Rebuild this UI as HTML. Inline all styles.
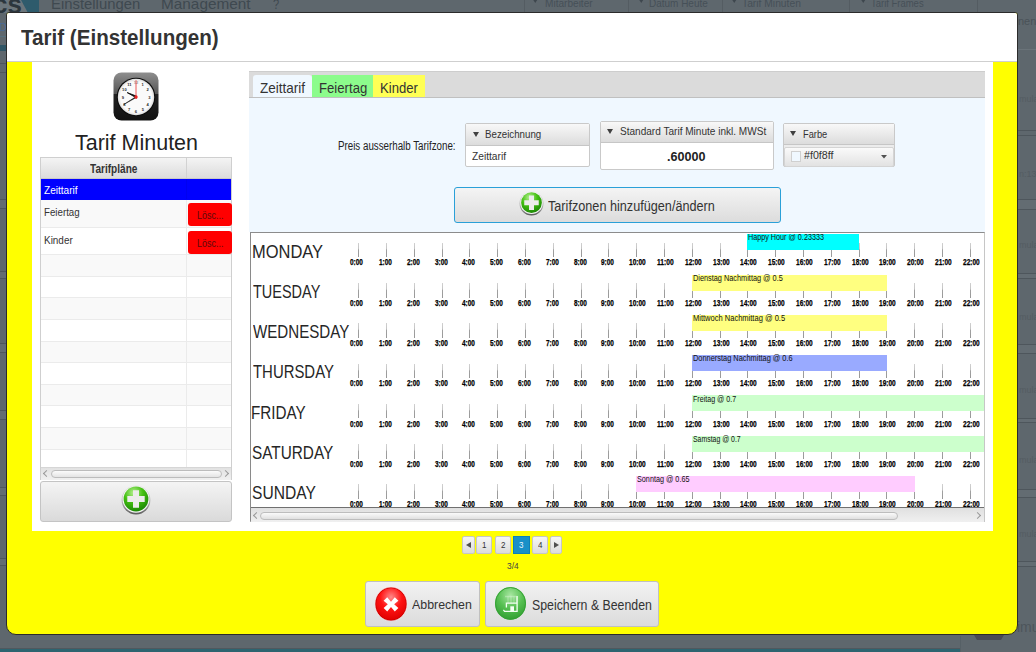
<!DOCTYPE html>
<html><head><meta charset="utf-8">
<style>
*{box-sizing:border-box;margin:0;padding:0}
html,body{width:1036px;height:652px;overflow:hidden}
body{position:relative;background:#5e676d;font-family:"Liberation Sans",sans-serif;color:#333}
.a{position:absolute}
.t{position:absolute;white-space:nowrap;transform-origin:0 0}
#modal{position:absolute;left:6px;top:12px;width:1012px;height:623px;background:#ffff00;border:1px solid #2b2b2b;border-radius:3px 3px 10px 10px;overflow:hidden}
#hdr{position:absolute;left:0;top:0;width:100%;height:49px;background:#fff;border-bottom:1px solid #cfcfcf}
#panel{position:absolute;left:32px;top:62px;width:961px;height:469.3px;background:#fff}
#table{position:absolute;left:40px;top:157px;width:192px;height:323px;border:1px solid #cfcfcf;border-bottom:none;background:#fff}
.th{position:absolute;left:41px;top:158px;width:190px;height:21.3px;background:linear-gradient(#f4f4f4,#dcdcdc);border-bottom:1px solid #c8c8c8}
.th i{position:absolute;left:144.6px;top:0;height:100%;border-left:1px solid #d2d2d2}
.tr{position:absolute;left:41px;width:190px;background:#fff;border-bottom:1px solid #ebebeb}
.tr.alt{background:#f9f9f9}
.tr.sel{background:#0000ff;border-bottom-color:#0000ff}
.tr::after{content:"";position:absolute;left:144.6px;top:0;height:100%;border-left:1px solid #ebebeb}
.tr.sel::after{border-left-color:#0000f0}
.del{position:absolute;left:188.1px;width:43.5px;height:23.2px;background:#ff0000;border-radius:3px}
#tscroll{position:absolute;left:41px;top:467.4px;width:190px;height:12.2px;background:linear-gradient(#e2e2e2,#f0f0f0);border-top:1px solid #d6d6d6}
#tscroll .thumb{position:absolute;left:9.5px;top:1.3px;width:171px;height:8.3px;border:1px solid #bcbcbc;border-radius:4px;background:linear-gradient(#fbfbfb,#e4e4e4)}
.chev{position:absolute;width:5px;height:5px;border-left:1px solid #999;border-bottom:1px solid #999}
#addbtn{position:absolute;left:40px;top:480.5px;width:192px;height:41.5px;border:1px solid #c4c4c4;border-radius:3px;background:linear-gradient(#f4f4f4,#dadada)}
#tabhdr{position:absolute;left:249px;top:70.8px;width:735.5px;height:27.5px;background:#dbdbdb;border-top:1px solid #cdcdcd;border-bottom:1.3px solid #c0c0c0}
.tab{position:absolute;top:74.8px;height:22.2px}
#content{position:absolute;left:249px;top:98px;width:735.5px;height:134px;background:#f0f8ff}
.colbox{position:absolute;border:1px solid #c9c9c9;border-radius:2px;background:#fff}
.colh{position:absolute;left:0;top:0;width:100%;height:21px;background:linear-gradient(#f8f8f8,#dcdcdc);border-bottom:1px solid #c6c6c6}
.tri{position:absolute;width:0;height:0;border-left:2.9px solid transparent;border-right:2.9px solid transparent;border-top:4.6px solid #444}
#tzbtn{position:absolute;left:454px;top:186.6px;width:327px;height:36.2px;border:1px solid #2aa0d8;border-radius:3px;background:linear-gradient(#f4f4f4,#dcdcdc)}
#tl{position:absolute;left:249.6px;top:232.2px;width:735.4px;height:290.2px;border:1px solid #c6c6c6;border-left-color:#8a8a8a;border-top:1.3px solid #8c8c8c;background:#fff}
#tlclip{position:absolute;left:250.6px;top:233.5px;width:733.4px;height:273.8px;overflow:hidden}
#tlin{position:absolute;left:-250.6px;top:-233.5px;width:1036px;height:652px}
.tlb{-webkit-text-stroke:0.25px #000}
.tick{position:absolute;width:1px;height:14.6px;background:linear-gradient(#d0d0d0,#c4c4c4 40%,#a0a0a0 50%,#989898)}
.bar{position:absolute;height:16px}
#hscroll{position:absolute;left:250.6px;top:507.3px;width:733.4px;height:14.4px;background:linear-gradient(#e0e0e0,#f0f0f0);border-top:1px solid #707070}
#hscroll .thumb{position:absolute;left:9.4px;top:3.9px;width:638.3px;height:7.4px;border:1px solid #bdbdbd;border-radius:4px;background:linear-gradient(#fafafa,#e0e0e0)}
.pg{position:absolute;top:536.1px;height:17.6px;border:1px solid #c6c6c6;border-radius:2px;background:linear-gradient(#f6f6f6,#dcdcdc)}
.pg.sel{background:#1990c8;border-color:#0f80b8;border-radius:0}
.btn{position:absolute;top:581px;height:45.8px;border:1px solid #c0c0c0;border-radius:3px;background:linear-gradient(#f2f2f2,#dcdcdc)}
.bgl{position:absolute;background:#545c62}
</style></head><body>
<div class="a" style="left:0;top:0;width:28px;height:13px;background:#6b757b"></div>
<svg class="a" style="left:0;top:0" width="40" height="13"><path d="M21 0H39V13H28Z" fill="#2e5b6c"/></svg>
<div class="t" style="left:-7px;top:-9px;font-size:26px;line-height:26px;font-weight:bold;color:#2c363d">cs</div>
<div class="t" style="left:-1px;top:22px;font-size:11px;line-height:11px;color:#4a6a96">D</div>
<div class="a" style="left:0;top:35.5px;width:7px;height:1px;background:#56707e"></div>
<div class="t " style="left:50.59px;top:-3.17px;font-size:14.78px;line-height:14.78px;color:#3f4950;transform:scaleX(1.006);">Einstellungen</div><div class="t " style="left:160.96px;top:-3.17px;font-size:14.78px;line-height:14.78px;color:#3f4950;transform:scaleX(1.040);">Management</div><div class="t " style="left:273.00px;top:-3.17px;font-size:14.78px;line-height:14.78px;color:#3f4950;transform:scaleX(0.750);">?</div><div class="t " style="left:544.60px;top:-0.75px;font-size:10.29px;line-height:10.29px;color:#465058;transform:scaleX(0.981);">Mitarbeiter</div><div class="t " style="left:649.00px;top:-0.75px;font-size:10.29px;line-height:10.29px;color:#465058;transform:scaleX(0.970);">Datum Heute</div><div class="t " style="left:742.00px;top:-0.75px;font-size:10.29px;line-height:10.29px;color:#465058;">Tarif Minuten</div><div class="t " style="left:870.50px;top:-0.75px;font-size:10.29px;line-height:10.29px;color:#465058;transform:scaleX(0.921);">Tarif Frames</div><svg class="a" style="left:532px;top:-2px" width="7" height="6"><path d="M0 0H6.5L3.25 5Z" fill="#3e474e"/></svg><svg class="a" style="left:637.5px;top:-2px" width="7" height="6"><path d="M0 0H6.5L3.25 5Z" fill="#3e474e"/></svg><svg class="a" style="left:731px;top:-2px" width="7" height="6"><path d="M0 0H6.5L3.25 5Z" fill="#3e474e"/></svg><svg class="a" style="left:859.5px;top:-2px" width="7" height="6"><path d="M0 0H6.5L3.25 5Z" fill="#3e474e"/></svg>
<div class="a" style="left:0;top:199px;width:7px;height:1px;background:#4e565c"></div><div class="a" style="left:0;top:208px;width:7px;height:1px;background:#4e565c"></div><div class="a" style="left:0;top:200px;width:7px;height:8px;background:#636c72"></div><div class="a" style="left:0;top:271px;width:7px;height:1px;background:#4e565c"></div><div class="a" style="left:0;top:278px;width:7px;height:1px;background:#4e565c"></div><div class="a" style="left:0;top:272px;width:7px;height:6px;background:#636c72"></div><div class="a" style="left:0;top:343px;width:7px;height:1px;background:#4e565c"></div><div class="a" style="left:0;top:352px;width:7px;height:1px;background:#4e565c"></div><div class="a" style="left:0;top:344px;width:7px;height:8px;background:#636c72"></div><div class="a" style="left:0;top:410px;width:7px;height:1px;background:#4e565c"></div><div class="a" style="left:0;top:419px;width:7px;height:1px;background:#4e565c"></div><div class="a" style="left:0;top:411px;width:7px;height:8px;background:#636c72"></div><div class="a" style="left:0;top:487px;width:7px;height:1px;background:#4e565c"></div><div class="a" style="left:0;top:495px;width:7px;height:1px;background:#4e565c"></div><div class="a" style="left:0;top:488px;width:7px;height:7px;background:#636c72"></div><div class="a" style="left:0;top:558px;width:7px;height:1px;background:#4e565c"></div><div class="a" style="left:0;top:565px;width:7px;height:1px;background:#4e565c"></div><div class="a" style="left:0;top:559px;width:7px;height:6px;background:#636c72"></div><div class="a" style="left:1018px;top:199px;width:18px;height:1px;background:#4e565c"></div><div class="a" style="left:1018px;top:209px;width:18px;height:1px;background:#4e565c"></div><div class="a" style="left:1018px;top:200px;width:18px;height:9px;background:#636c72"></div><div class="a" style="left:1018px;top:273px;width:18px;height:1px;background:#4e565c"></div><div class="a" style="left:1018px;top:278px;width:18px;height:1px;background:#4e565c"></div><div class="a" style="left:1018px;top:274px;width:18px;height:4px;background:#636c72"></div><div class="a" style="left:1018px;top:344px;width:18px;height:1px;background:#4e565c"></div><div class="a" style="left:1018px;top:353px;width:18px;height:1px;background:#4e565c"></div><div class="a" style="left:1018px;top:345px;width:18px;height:8px;background:#636c72"></div><div class="a" style="left:1018px;top:418px;width:18px;height:1px;background:#4e565c"></div><div class="a" style="left:1018px;top:422px;width:18px;height:1px;background:#4e565c"></div><div class="a" style="left:1018px;top:419px;width:18px;height:3px;background:#636c72"></div><div class="a" style="left:1018px;top:489px;width:18px;height:1px;background:#4e565c"></div><div class="a" style="left:1018px;top:497px;width:18px;height:1px;background:#4e565c"></div><div class="a" style="left:1018px;top:490px;width:18px;height:7px;background:#636c72"></div><div class="a" style="left:1018px;top:561px;width:18px;height:1px;background:#4e565c"></div><div class="a" style="left:1018px;top:566px;width:18px;height:1px;background:#4e565c"></div><div class="a" style="left:1018px;top:562px;width:18px;height:4px;background:#636c72"></div><div class="a" style="left:1018px;top:49px;width:18px;height:1px;background:#6a7379"></div><div class="a" style="left:1018px;top:130px;width:18px;height:1px;background:#4e565c"></div><div class="a" style="left:1018px;top:135px;width:18px;height:1px;background:#4e565c"></div><div class="a" style="left:0;top:44.5px;width:7px;height:6.5px;background:#2f5565"></div><div class="a" style="left:0;top:63px;width:7px;height:1px;background:#4e565c"></div><div class="a" style="left:0;top:72px;width:7px;height:1px;background:#4e565c"></div><div class="t" style="left:1019px;top:95px;font-size:9px;line-height:9px;color:#545c62">mulat</div><div class="t" style="left:1019px;top:170px;font-size:9px;line-height:9px;color:#545c62">n:13</div><div class="t" style="left:1019px;top:241px;font-size:9px;line-height:9px;color:#545c62">mulat</div><div class="t" style="left:1019px;top:313px;font-size:9px;line-height:9px;color:#545c62">mulat</div><div class="t" style="left:1019px;top:386px;font-size:9px;line-height:9px;color:#545c62">mulat</div><div class="t" style="left:1019px;top:456px;font-size:9px;line-height:9px;color:#545c62">mulat</div><div class="t" style="left:1019px;top:530px;font-size:9px;line-height:9px;color:#545c62">mulat</div><div class="t" style="left:1018px;top:16px;font-size:11px;line-height:11px;color:#4a5258">nena</div><div class="t" style="left:1017px;top:620px;font-size:14px;line-height:14px;color:#4d555b">imu</div>
<div class="bgl" style="left:523.5px;top:0;width:1px;height:13px"></div>
<div class="bgl" style="left:627.5px;top:0;width:1px;height:13px"></div>
<div class="bgl" style="left:721.5px;top:0;width:1px;height:13px"></div>
<div class="bgl" style="left:849px;top:0;width:1px;height:13px"></div>
<div class="bgl" style="left:977px;top:0;width:1px;height:13px"></div>
<div class="a" style="left:0;top:648px;width:960px;height:1px;background:#50585e"></div><div class="a" style="left:0;top:649px;width:960px;height:3px;background:#2d6470"></div><div class="a" style="left:960px;top:636px;width:1px;height:16px;background:#566066"></div>
<svg class="a" style="left:973px;top:635px" width="32" height="6"><path d="M1 0 H31 L28 5 H4 Z" fill="#4a4a54"/></svg>

<div id="modal"><div id="hdr"></div></div>
<div id="panel"></div>
<div class="a" style="left:113px;top:72px"><svg width="46" height="49" viewBox="0 0 46 49">
<defs><linearGradient id="cg" x1="0" y1="0" x2="0" y2="1"><stop offset="0" stop-color="#8e8e8e"/><stop offset="0.44" stop-color="#555"/><stop offset="0.45" stop-color="#222"/><stop offset="1" stop-color="#111"/></linearGradient>
<radialGradient id="cf" cx="0.5" cy="0.5" r="0.5"><stop offset="0.85" stop-color="#fafafa"/><stop offset="1" stop-color="#dcdcdc"/></radialGradient></defs>
<rect x="0.5" y="0.5" width="45" height="48" rx="8" fill="url(#cg)"/>
<circle cx="23" cy="25" r="19.3" fill="#0c0c0c"/>
<circle cx="23" cy="25" r="18.2" fill="url(#cf)"/>
<g font-family="Liberation Sans" font-size="4.1" font-weight="bold" fill="#2a2a2a" text-anchor="middle">
<text x="23" y="12.3" fill="#999">12</text><text x="29.6" y="14">1</text><text x="34.6" y="19.2">2</text><text x="36.3" y="26.5">3</text><text x="34.6" y="33.6">4</text><text x="29.8" y="38.6">5</text><text x="23" y="40.6">6</text><text x="16.2" y="38.6">7</text><text x="11.4" y="33.6">8</text><text x="9.8" y="26.5">9</text><text x="11.4" y="19.2">10</text><text x="16.3" y="14">11</text></g>
<path d="M23.6 26 L14.2 20.6 L22.6 23.8 Z" fill="#111" stroke="#111" stroke-width="0.9" stroke-linejoin="round"/>
<path d="M23.6 24.2 L10.6 32.6 L22.4 26 Z" fill="#111" stroke="#111" stroke-width="0.5" stroke-linejoin="round"/>
<line x1="23" y1="27" x2="23" y2="8.2" stroke="#e82020" stroke-width="0.75"/>
<circle cx="23" cy="25" r="1.7" fill="#e82020"/>
</svg></div>
<div id="table"></div>
<div class="th"><i></i></div>
<div class="tr sel" style="top:178.6px;height:21.6px"></div>
<div class="tr alt" style="top:200.2px;height:27.4px"></div>
<div class="del" style="top:203.1px"></div>
<div class="tr " style="top:227.6px;height:27.6px"></div>
<div class="del" style="top:230.5px"></div>
<div class="tr alt" style="top:255.2px;height:21.6px"></div>
<div class="tr " style="top:276.8px;height:21.6px"></div>
<div class="tr alt" style="top:298.4px;height:21.6px"></div>
<div class="tr " style="top:320.0px;height:21.6px"></div>
<div class="tr alt" style="top:341.6px;height:21.6px"></div>
<div class="tr " style="top:363.2px;height:21.6px"></div>
<div class="tr alt" style="top:384.8px;height:21.6px"></div>
<div class="tr " style="top:406.4px;height:21.6px"></div>
<div class="tr alt" style="top:428.0px;height:21.6px"></div>
<div class="tr " style="top:449.6px;height:21.6px"></div>
<div class="t " style="left:43.70px;top:184.61px;font-size:11.16px;line-height:11.16px;color:#fff;transform:scaleX(0.903);">Zeittarif</div>
<div class="t " style="left:43.70px;top:206.32px;font-size:11.74px;line-height:11.74px;color:#333;transform:scaleX(0.828);">Feiertag</div>
<div class="t " style="left:43.70px;top:234.02px;font-size:11.74px;line-height:11.74px;color:#333;transform:scaleX(0.847);">Kinder</div>
<div class="t " style="left:197.20px;top:210.85px;font-size:10.29px;line-height:10.29px;color:#5c0a0a;transform:scaleX(0.873);">Lösc...</div>
<div class="t " style="left:197.20px;top:238.65px;font-size:10.29px;line-height:10.29px;color:#5c0a0a;transform:scaleX(0.873);">Lösc...</div>
<div id="tscroll"><div class="chev" style="left:3px;top:3px;transform:rotate(45deg)"></div><div class="thumb"></div><div class="chev" style="left:182px;top:3px;transform:rotate(-135deg)"></div></div>
<div id="addbtn"></div><div class="a" style="left:120.6px;top:483.6px"><svg width="30" height="32" viewBox="0 0 30 32">
<defs><radialGradient id="ga" cx="0.4" cy="0.25" r="0.75"><stop offset="0" stop-color="#b4f090"/><stop offset="0.5" stop-color="#44c012"/><stop offset="1" stop-color="#1d8a06"/></radialGradient>
<linearGradient id="ra" x1="0" y1="0" x2="0" y2="1"><stop offset="0" stop-color="#e8e8e8"/><stop offset="0.6" stop-color="#b0b0b0"/><stop offset="1" stop-color="#5a5a5a"/></linearGradient></defs>
<circle cx="15" cy="16" r="14.4" fill="url(#ra)"/>
<circle cx="15" cy="15.3" r="13.4" fill="#f6f6f6"/>
<circle cx="15" cy="15" r="12.4" fill="url(#ga)"/>
<path d="M12 6.3h6v5.7h5.7v6H18v5.7h-6V18H6.3v-6H12z" fill="#ececec"/>
</svg></div>

<div id="tabhdr"></div>
<div class="tab" style="left:253px;width:59.2px;background:#f0f8ff;border-radius:3px 3px 0 0"></div>
<div class="tab" style="left:312.2px;width:60.8px;background:#8cfc8c"></div>
<div class="tab" style="left:373px;width:51.5px;background:#ffff55"></div>
<div id="content"></div>
<div class="colbox" style="left:465px;top:123px;width:125.4px;height:44.4px"><div class="colh" style="height:21.7px"></div></div>
<div class="colbox" style="left:599.5px;top:120.7px;width:174px;height:49.3px"><div class="colh" style="height:21.4px"></div></div>
<div class="colbox" style="left:782.5px;top:123.2px;width:112px;height:44px;background:#ececec"><div class="colh" style="height:21.3px"></div>
 <div class="a" style="left:0.5px;top:22.4px;width:110px;height:20px;border:1px solid #d4d4d4;border-radius:2px;background:linear-gradient(#fafafa,#e2e2e2)"></div>
 <div class="a" style="left:7.2px;top:26.7px;width:10.5px;height:11.3px;background:#f0f8ff;border:1px solid #d0d0d0"></div>
 
</div>
<svg class="a" style="left:473px;top:131.7px" width="6" height="5"><path d="M0 0H6L3 5Z" fill="#404040"/></svg><svg class="a" style="left:607.4px;top:129.2px" width="6" height="5"><path d="M0 0H6L3 5Z" fill="#404040"/></svg><svg class="a" style="left:790.3px;top:131.3px" width="6" height="5"><path d="M0 0H6L3 5Z" fill="#404040"/></svg>
<svg class="a" style="left:881px;top:154.8px" width="6" height="4"><path d="M0 0H6L3 3.6Z" fill="#505050"/></svg>
<div id="tzbtn"></div><div class="a" style="left:519px;top:190.1px"><svg width="25" height="27" viewBox="0 0 30 32">
<defs><radialGradient id="gb" cx="0.4" cy="0.25" r="0.75"><stop offset="0" stop-color="#b4f090"/><stop offset="0.5" stop-color="#44c012"/><stop offset="1" stop-color="#1d8a06"/></radialGradient>
<linearGradient id="rb" x1="0" y1="0" x2="0" y2="1"><stop offset="0" stop-color="#e8e8e8"/><stop offset="0.6" stop-color="#b0b0b0"/><stop offset="1" stop-color="#5a5a5a"/></linearGradient></defs>
<circle cx="15" cy="16" r="14.4" fill="url(#rb)"/>
<circle cx="15" cy="15.3" r="13.4" fill="#f6f6f6"/>
<circle cx="15" cy="15" r="12.4" fill="url(#gb)"/>
<path d="M12 6.3h6v5.7h5.7v6H18v5.7h-6V18H6.3v-6H12z" fill="#ececec"/>
</svg></div>

<div id="tl"></div>
<div id="tlclip"><div id="tlin">
<div class="t " style="left:251.57px;top:243.57px;font-size:17.68px;line-height:17.68px;color:#262626;transform:scaleX(0.932);">MONDAY</div>
<div class="tick" style="left:358.1px;top:242.8px"></div>
<div class="t tlb" style="left:350.30px;top:258.49px;font-size:8.84px;line-height:8.84px;color:#000;font-weight:bold;transform:scaleX(0.732);">0:00</div>
<div class="tick" style="left:385.9px;top:242.8px"></div>
<div class="t tlb" style="left:378.90px;top:258.49px;font-size:8.84px;line-height:8.84px;color:#000;font-weight:bold;transform:scaleX(0.732);">1:00</div>
<div class="tick" style="left:413.7px;top:242.8px"></div>
<div class="t tlb" style="left:406.70px;top:258.49px;font-size:8.84px;line-height:8.84px;color:#000;font-weight:bold;transform:scaleX(0.732);">2:00</div>
<div class="tick" style="left:441.5px;top:242.8px"></div>
<div class="t tlb" style="left:434.50px;top:258.49px;font-size:8.84px;line-height:8.84px;color:#000;font-weight:bold;transform:scaleX(0.732);">3:00</div>
<div class="tick" style="left:469.3px;top:242.8px"></div>
<div class="t tlb" style="left:462.30px;top:258.49px;font-size:8.84px;line-height:8.84px;color:#000;font-weight:bold;transform:scaleX(0.732);">4:00</div>
<div class="tick" style="left:497.1px;top:242.8px"></div>
<div class="t tlb" style="left:490.10px;top:258.49px;font-size:8.84px;line-height:8.84px;color:#000;font-weight:bold;transform:scaleX(0.732);">5:00</div>
<div class="tick" style="left:524.9px;top:242.8px"></div>
<div class="t tlb" style="left:517.90px;top:258.49px;font-size:8.84px;line-height:8.84px;color:#000;font-weight:bold;transform:scaleX(0.732);">6:00</div>
<div class="tick" style="left:552.7px;top:242.8px"></div>
<div class="t tlb" style="left:545.70px;top:258.49px;font-size:8.84px;line-height:8.84px;color:#000;font-weight:bold;transform:scaleX(0.732);">7:00</div>
<div class="tick" style="left:580.5px;top:242.8px"></div>
<div class="t tlb" style="left:573.50px;top:258.49px;font-size:8.84px;line-height:8.84px;color:#000;font-weight:bold;transform:scaleX(0.732);">8:00</div>
<div class="tick" style="left:608.3px;top:242.8px"></div>
<div class="t tlb" style="left:601.30px;top:258.49px;font-size:8.84px;line-height:8.84px;color:#000;font-weight:bold;transform:scaleX(0.732);">9:00</div>
<div class="tick" style="left:636.1px;top:242.8px"></div>
<div class="t tlb" style="left:629.10px;top:258.49px;font-size:8.84px;line-height:8.84px;color:#000;font-weight:bold;transform:scaleX(0.741);">10:00</div>
<div class="tick" style="left:663.9px;top:242.8px"></div>
<div class="t tlb" style="left:656.90px;top:258.49px;font-size:8.84px;line-height:8.84px;color:#000;font-weight:bold;transform:scaleX(0.757);">11:00</div>
<div class="tick" style="left:691.7px;top:242.8px"></div>
<div class="t tlb" style="left:684.70px;top:258.49px;font-size:8.84px;line-height:8.84px;color:#000;font-weight:bold;transform:scaleX(0.741);">12:00</div>
<div class="tick" style="left:719.5px;top:242.8px"></div>
<div class="t tlb" style="left:712.50px;top:258.49px;font-size:8.84px;line-height:8.84px;color:#000;font-weight:bold;transform:scaleX(0.741);">13:00</div>
<div class="tick" style="left:747.3px;top:242.8px"></div>
<div class="t tlb" style="left:740.30px;top:258.49px;font-size:8.84px;line-height:8.84px;color:#000;font-weight:bold;transform:scaleX(0.741);">14:00</div>
<div class="tick" style="left:775.1px;top:242.8px"></div>
<div class="t tlb" style="left:768.10px;top:258.49px;font-size:8.84px;line-height:8.84px;color:#000;font-weight:bold;transform:scaleX(0.741);">15:00</div>
<div class="tick" style="left:802.9px;top:242.8px"></div>
<div class="t tlb" style="left:795.90px;top:258.49px;font-size:8.84px;line-height:8.84px;color:#000;font-weight:bold;transform:scaleX(0.741);">16:00</div>
<div class="tick" style="left:830.7px;top:242.8px"></div>
<div class="t tlb" style="left:823.70px;top:258.49px;font-size:8.84px;line-height:8.84px;color:#000;font-weight:bold;transform:scaleX(0.741);">17:00</div>
<div class="tick" style="left:858.5px;top:242.8px"></div>
<div class="t tlb" style="left:851.50px;top:258.49px;font-size:8.84px;line-height:8.84px;color:#000;font-weight:bold;transform:scaleX(0.741);">18:00</div>
<div class="tick" style="left:886.3px;top:242.8px"></div>
<div class="t tlb" style="left:879.30px;top:258.49px;font-size:8.84px;line-height:8.84px;color:#000;font-weight:bold;transform:scaleX(0.741);">19:00</div>
<div class="tick" style="left:914.1px;top:242.8px"></div>
<div class="t tlb" style="left:907.10px;top:258.49px;font-size:8.84px;line-height:8.84px;color:#000;font-weight:bold;transform:scaleX(0.741);">20:00</div>
<div class="tick" style="left:941.9px;top:242.8px"></div>
<div class="t tlb" style="left:934.90px;top:258.49px;font-size:8.84px;line-height:8.84px;color:#000;font-weight:bold;transform:scaleX(0.741);">21:00</div>
<div class="tick" style="left:969.7px;top:242.8px"></div>
<div class="t tlb" style="left:962.70px;top:258.49px;font-size:8.84px;line-height:8.84px;color:#000;font-weight:bold;transform:scaleX(0.741);">22:00</div>
<div class="t " style="left:252.50px;top:283.84px;font-size:17.68px;line-height:17.68px;color:#262626;transform:scaleX(0.819);">TUESDAY</div>
<div class="tick" style="left:358.1px;top:283.1px"></div>
<div class="t tlb" style="left:350.30px;top:298.76px;font-size:8.84px;line-height:8.84px;color:#000;font-weight:bold;transform:scaleX(0.732);">0:00</div>
<div class="tick" style="left:385.9px;top:283.1px"></div>
<div class="t tlb" style="left:378.90px;top:298.76px;font-size:8.84px;line-height:8.84px;color:#000;font-weight:bold;transform:scaleX(0.732);">1:00</div>
<div class="tick" style="left:413.7px;top:283.1px"></div>
<div class="t tlb" style="left:406.70px;top:298.76px;font-size:8.84px;line-height:8.84px;color:#000;font-weight:bold;transform:scaleX(0.732);">2:00</div>
<div class="tick" style="left:441.5px;top:283.1px"></div>
<div class="t tlb" style="left:434.50px;top:298.76px;font-size:8.84px;line-height:8.84px;color:#000;font-weight:bold;transform:scaleX(0.732);">3:00</div>
<div class="tick" style="left:469.3px;top:283.1px"></div>
<div class="t tlb" style="left:462.30px;top:298.76px;font-size:8.84px;line-height:8.84px;color:#000;font-weight:bold;transform:scaleX(0.732);">4:00</div>
<div class="tick" style="left:497.1px;top:283.1px"></div>
<div class="t tlb" style="left:490.10px;top:298.76px;font-size:8.84px;line-height:8.84px;color:#000;font-weight:bold;transform:scaleX(0.732);">5:00</div>
<div class="tick" style="left:524.9px;top:283.1px"></div>
<div class="t tlb" style="left:517.90px;top:298.76px;font-size:8.84px;line-height:8.84px;color:#000;font-weight:bold;transform:scaleX(0.732);">6:00</div>
<div class="tick" style="left:552.7px;top:283.1px"></div>
<div class="t tlb" style="left:545.70px;top:298.76px;font-size:8.84px;line-height:8.84px;color:#000;font-weight:bold;transform:scaleX(0.732);">7:00</div>
<div class="tick" style="left:580.5px;top:283.1px"></div>
<div class="t tlb" style="left:573.50px;top:298.76px;font-size:8.84px;line-height:8.84px;color:#000;font-weight:bold;transform:scaleX(0.732);">8:00</div>
<div class="tick" style="left:608.3px;top:283.1px"></div>
<div class="t tlb" style="left:601.30px;top:298.76px;font-size:8.84px;line-height:8.84px;color:#000;font-weight:bold;transform:scaleX(0.732);">9:00</div>
<div class="tick" style="left:636.1px;top:283.1px"></div>
<div class="t tlb" style="left:629.10px;top:298.76px;font-size:8.84px;line-height:8.84px;color:#000;font-weight:bold;transform:scaleX(0.741);">10:00</div>
<div class="tick" style="left:663.9px;top:283.1px"></div>
<div class="t tlb" style="left:656.90px;top:298.76px;font-size:8.84px;line-height:8.84px;color:#000;font-weight:bold;transform:scaleX(0.757);">11:00</div>
<div class="tick" style="left:691.7px;top:283.1px"></div>
<div class="t tlb" style="left:684.70px;top:298.76px;font-size:8.84px;line-height:8.84px;color:#000;font-weight:bold;transform:scaleX(0.741);">12:00</div>
<div class="tick" style="left:719.5px;top:283.1px"></div>
<div class="t tlb" style="left:712.50px;top:298.76px;font-size:8.84px;line-height:8.84px;color:#000;font-weight:bold;transform:scaleX(0.741);">13:00</div>
<div class="tick" style="left:747.3px;top:283.1px"></div>
<div class="t tlb" style="left:740.30px;top:298.76px;font-size:8.84px;line-height:8.84px;color:#000;font-weight:bold;transform:scaleX(0.741);">14:00</div>
<div class="tick" style="left:775.1px;top:283.1px"></div>
<div class="t tlb" style="left:768.10px;top:298.76px;font-size:8.84px;line-height:8.84px;color:#000;font-weight:bold;transform:scaleX(0.741);">15:00</div>
<div class="tick" style="left:802.9px;top:283.1px"></div>
<div class="t tlb" style="left:795.90px;top:298.76px;font-size:8.84px;line-height:8.84px;color:#000;font-weight:bold;transform:scaleX(0.741);">16:00</div>
<div class="tick" style="left:830.7px;top:283.1px"></div>
<div class="t tlb" style="left:823.70px;top:298.76px;font-size:8.84px;line-height:8.84px;color:#000;font-weight:bold;transform:scaleX(0.741);">17:00</div>
<div class="tick" style="left:858.5px;top:283.1px"></div>
<div class="t tlb" style="left:851.50px;top:298.76px;font-size:8.84px;line-height:8.84px;color:#000;font-weight:bold;transform:scaleX(0.741);">18:00</div>
<div class="tick" style="left:886.3px;top:283.1px"></div>
<div class="t tlb" style="left:879.30px;top:298.76px;font-size:8.84px;line-height:8.84px;color:#000;font-weight:bold;transform:scaleX(0.741);">19:00</div>
<div class="tick" style="left:914.1px;top:283.1px"></div>
<div class="t tlb" style="left:907.10px;top:298.76px;font-size:8.84px;line-height:8.84px;color:#000;font-weight:bold;transform:scaleX(0.741);">20:00</div>
<div class="tick" style="left:941.9px;top:283.1px"></div>
<div class="t tlb" style="left:934.90px;top:298.76px;font-size:8.84px;line-height:8.84px;color:#000;font-weight:bold;transform:scaleX(0.741);">21:00</div>
<div class="tick" style="left:969.7px;top:283.1px"></div>
<div class="t tlb" style="left:962.70px;top:298.76px;font-size:8.84px;line-height:8.84px;color:#000;font-weight:bold;transform:scaleX(0.741);">22:00</div>
<div class="t " style="left:252.50px;top:324.11px;font-size:17.68px;line-height:17.68px;color:#262626;transform:scaleX(0.855);">WEDNESDAY</div>
<div class="tick" style="left:358.1px;top:323.3px"></div>
<div class="t tlb" style="left:350.30px;top:339.03px;font-size:8.84px;line-height:8.84px;color:#000;font-weight:bold;transform:scaleX(0.732);">0:00</div>
<div class="tick" style="left:385.9px;top:323.3px"></div>
<div class="t tlb" style="left:378.90px;top:339.03px;font-size:8.84px;line-height:8.84px;color:#000;font-weight:bold;transform:scaleX(0.732);">1:00</div>
<div class="tick" style="left:413.7px;top:323.3px"></div>
<div class="t tlb" style="left:406.70px;top:339.03px;font-size:8.84px;line-height:8.84px;color:#000;font-weight:bold;transform:scaleX(0.732);">2:00</div>
<div class="tick" style="left:441.5px;top:323.3px"></div>
<div class="t tlb" style="left:434.50px;top:339.03px;font-size:8.84px;line-height:8.84px;color:#000;font-weight:bold;transform:scaleX(0.732);">3:00</div>
<div class="tick" style="left:469.3px;top:323.3px"></div>
<div class="t tlb" style="left:462.30px;top:339.03px;font-size:8.84px;line-height:8.84px;color:#000;font-weight:bold;transform:scaleX(0.732);">4:00</div>
<div class="tick" style="left:497.1px;top:323.3px"></div>
<div class="t tlb" style="left:490.10px;top:339.03px;font-size:8.84px;line-height:8.84px;color:#000;font-weight:bold;transform:scaleX(0.732);">5:00</div>
<div class="tick" style="left:524.9px;top:323.3px"></div>
<div class="t tlb" style="left:517.90px;top:339.03px;font-size:8.84px;line-height:8.84px;color:#000;font-weight:bold;transform:scaleX(0.732);">6:00</div>
<div class="tick" style="left:552.7px;top:323.3px"></div>
<div class="t tlb" style="left:545.70px;top:339.03px;font-size:8.84px;line-height:8.84px;color:#000;font-weight:bold;transform:scaleX(0.732);">7:00</div>
<div class="tick" style="left:580.5px;top:323.3px"></div>
<div class="t tlb" style="left:573.50px;top:339.03px;font-size:8.84px;line-height:8.84px;color:#000;font-weight:bold;transform:scaleX(0.732);">8:00</div>
<div class="tick" style="left:608.3px;top:323.3px"></div>
<div class="t tlb" style="left:601.30px;top:339.03px;font-size:8.84px;line-height:8.84px;color:#000;font-weight:bold;transform:scaleX(0.732);">9:00</div>
<div class="tick" style="left:636.1px;top:323.3px"></div>
<div class="t tlb" style="left:629.10px;top:339.03px;font-size:8.84px;line-height:8.84px;color:#000;font-weight:bold;transform:scaleX(0.741);">10:00</div>
<div class="tick" style="left:663.9px;top:323.3px"></div>
<div class="t tlb" style="left:656.90px;top:339.03px;font-size:8.84px;line-height:8.84px;color:#000;font-weight:bold;transform:scaleX(0.757);">11:00</div>
<div class="tick" style="left:691.7px;top:323.3px"></div>
<div class="t tlb" style="left:684.70px;top:339.03px;font-size:8.84px;line-height:8.84px;color:#000;font-weight:bold;transform:scaleX(0.741);">12:00</div>
<div class="tick" style="left:719.5px;top:323.3px"></div>
<div class="t tlb" style="left:712.50px;top:339.03px;font-size:8.84px;line-height:8.84px;color:#000;font-weight:bold;transform:scaleX(0.741);">13:00</div>
<div class="tick" style="left:747.3px;top:323.3px"></div>
<div class="t tlb" style="left:740.30px;top:339.03px;font-size:8.84px;line-height:8.84px;color:#000;font-weight:bold;transform:scaleX(0.741);">14:00</div>
<div class="tick" style="left:775.1px;top:323.3px"></div>
<div class="t tlb" style="left:768.10px;top:339.03px;font-size:8.84px;line-height:8.84px;color:#000;font-weight:bold;transform:scaleX(0.741);">15:00</div>
<div class="tick" style="left:802.9px;top:323.3px"></div>
<div class="t tlb" style="left:795.90px;top:339.03px;font-size:8.84px;line-height:8.84px;color:#000;font-weight:bold;transform:scaleX(0.741);">16:00</div>
<div class="tick" style="left:830.7px;top:323.3px"></div>
<div class="t tlb" style="left:823.70px;top:339.03px;font-size:8.84px;line-height:8.84px;color:#000;font-weight:bold;transform:scaleX(0.741);">17:00</div>
<div class="tick" style="left:858.5px;top:323.3px"></div>
<div class="t tlb" style="left:851.50px;top:339.03px;font-size:8.84px;line-height:8.84px;color:#000;font-weight:bold;transform:scaleX(0.741);">18:00</div>
<div class="tick" style="left:886.3px;top:323.3px"></div>
<div class="t tlb" style="left:879.30px;top:339.03px;font-size:8.84px;line-height:8.84px;color:#000;font-weight:bold;transform:scaleX(0.741);">19:00</div>
<div class="tick" style="left:914.1px;top:323.3px"></div>
<div class="t tlb" style="left:907.10px;top:339.03px;font-size:8.84px;line-height:8.84px;color:#000;font-weight:bold;transform:scaleX(0.741);">20:00</div>
<div class="tick" style="left:941.9px;top:323.3px"></div>
<div class="t tlb" style="left:934.90px;top:339.03px;font-size:8.84px;line-height:8.84px;color:#000;font-weight:bold;transform:scaleX(0.741);">21:00</div>
<div class="tick" style="left:969.7px;top:323.3px"></div>
<div class="t tlb" style="left:962.70px;top:339.03px;font-size:8.84px;line-height:8.84px;color:#000;font-weight:bold;transform:scaleX(0.741);">22:00</div>
<div class="t " style="left:252.50px;top:364.38px;font-size:17.68px;line-height:17.68px;color:#262626;transform:scaleX(0.844);">THURSDAY</div>
<div class="tick" style="left:358.1px;top:363.6px"></div>
<div class="t tlb" style="left:350.30px;top:379.30px;font-size:8.84px;line-height:8.84px;color:#000;font-weight:bold;transform:scaleX(0.732);">0:00</div>
<div class="tick" style="left:385.9px;top:363.6px"></div>
<div class="t tlb" style="left:378.90px;top:379.30px;font-size:8.84px;line-height:8.84px;color:#000;font-weight:bold;transform:scaleX(0.732);">1:00</div>
<div class="tick" style="left:413.7px;top:363.6px"></div>
<div class="t tlb" style="left:406.70px;top:379.30px;font-size:8.84px;line-height:8.84px;color:#000;font-weight:bold;transform:scaleX(0.732);">2:00</div>
<div class="tick" style="left:441.5px;top:363.6px"></div>
<div class="t tlb" style="left:434.50px;top:379.30px;font-size:8.84px;line-height:8.84px;color:#000;font-weight:bold;transform:scaleX(0.732);">3:00</div>
<div class="tick" style="left:469.3px;top:363.6px"></div>
<div class="t tlb" style="left:462.30px;top:379.30px;font-size:8.84px;line-height:8.84px;color:#000;font-weight:bold;transform:scaleX(0.732);">4:00</div>
<div class="tick" style="left:497.1px;top:363.6px"></div>
<div class="t tlb" style="left:490.10px;top:379.30px;font-size:8.84px;line-height:8.84px;color:#000;font-weight:bold;transform:scaleX(0.732);">5:00</div>
<div class="tick" style="left:524.9px;top:363.6px"></div>
<div class="t tlb" style="left:517.90px;top:379.30px;font-size:8.84px;line-height:8.84px;color:#000;font-weight:bold;transform:scaleX(0.732);">6:00</div>
<div class="tick" style="left:552.7px;top:363.6px"></div>
<div class="t tlb" style="left:545.70px;top:379.30px;font-size:8.84px;line-height:8.84px;color:#000;font-weight:bold;transform:scaleX(0.732);">7:00</div>
<div class="tick" style="left:580.5px;top:363.6px"></div>
<div class="t tlb" style="left:573.50px;top:379.30px;font-size:8.84px;line-height:8.84px;color:#000;font-weight:bold;transform:scaleX(0.732);">8:00</div>
<div class="tick" style="left:608.3px;top:363.6px"></div>
<div class="t tlb" style="left:601.30px;top:379.30px;font-size:8.84px;line-height:8.84px;color:#000;font-weight:bold;transform:scaleX(0.732);">9:00</div>
<div class="tick" style="left:636.1px;top:363.6px"></div>
<div class="t tlb" style="left:629.10px;top:379.30px;font-size:8.84px;line-height:8.84px;color:#000;font-weight:bold;transform:scaleX(0.741);">10:00</div>
<div class="tick" style="left:663.9px;top:363.6px"></div>
<div class="t tlb" style="left:656.90px;top:379.30px;font-size:8.84px;line-height:8.84px;color:#000;font-weight:bold;transform:scaleX(0.757);">11:00</div>
<div class="tick" style="left:691.7px;top:363.6px"></div>
<div class="t tlb" style="left:684.70px;top:379.30px;font-size:8.84px;line-height:8.84px;color:#000;font-weight:bold;transform:scaleX(0.741);">12:00</div>
<div class="tick" style="left:719.5px;top:363.6px"></div>
<div class="t tlb" style="left:712.50px;top:379.30px;font-size:8.84px;line-height:8.84px;color:#000;font-weight:bold;transform:scaleX(0.741);">13:00</div>
<div class="tick" style="left:747.3px;top:363.6px"></div>
<div class="t tlb" style="left:740.30px;top:379.30px;font-size:8.84px;line-height:8.84px;color:#000;font-weight:bold;transform:scaleX(0.741);">14:00</div>
<div class="tick" style="left:775.1px;top:363.6px"></div>
<div class="t tlb" style="left:768.10px;top:379.30px;font-size:8.84px;line-height:8.84px;color:#000;font-weight:bold;transform:scaleX(0.741);">15:00</div>
<div class="tick" style="left:802.9px;top:363.6px"></div>
<div class="t tlb" style="left:795.90px;top:379.30px;font-size:8.84px;line-height:8.84px;color:#000;font-weight:bold;transform:scaleX(0.741);">16:00</div>
<div class="tick" style="left:830.7px;top:363.6px"></div>
<div class="t tlb" style="left:823.70px;top:379.30px;font-size:8.84px;line-height:8.84px;color:#000;font-weight:bold;transform:scaleX(0.741);">17:00</div>
<div class="tick" style="left:858.5px;top:363.6px"></div>
<div class="t tlb" style="left:851.50px;top:379.30px;font-size:8.84px;line-height:8.84px;color:#000;font-weight:bold;transform:scaleX(0.741);">18:00</div>
<div class="tick" style="left:886.3px;top:363.6px"></div>
<div class="t tlb" style="left:879.30px;top:379.30px;font-size:8.84px;line-height:8.84px;color:#000;font-weight:bold;transform:scaleX(0.741);">19:00</div>
<div class="tick" style="left:914.1px;top:363.6px"></div>
<div class="t tlb" style="left:907.10px;top:379.30px;font-size:8.84px;line-height:8.84px;color:#000;font-weight:bold;transform:scaleX(0.741);">20:00</div>
<div class="tick" style="left:941.9px;top:363.6px"></div>
<div class="t tlb" style="left:934.90px;top:379.30px;font-size:8.84px;line-height:8.84px;color:#000;font-weight:bold;transform:scaleX(0.741);">21:00</div>
<div class="tick" style="left:969.7px;top:363.6px"></div>
<div class="t tlb" style="left:962.70px;top:379.30px;font-size:8.84px;line-height:8.84px;color:#000;font-weight:bold;transform:scaleX(0.741);">22:00</div>
<div class="t " style="left:251.04px;top:404.65px;font-size:17.68px;line-height:17.68px;color:#262626;transform:scaleX(0.861);">FRIDAY</div>
<div class="tick" style="left:358.1px;top:403.9px"></div>
<div class="t tlb" style="left:350.30px;top:419.57px;font-size:8.84px;line-height:8.84px;color:#000;font-weight:bold;transform:scaleX(0.732);">0:00</div>
<div class="tick" style="left:385.9px;top:403.9px"></div>
<div class="t tlb" style="left:378.90px;top:419.57px;font-size:8.84px;line-height:8.84px;color:#000;font-weight:bold;transform:scaleX(0.732);">1:00</div>
<div class="tick" style="left:413.7px;top:403.9px"></div>
<div class="t tlb" style="left:406.70px;top:419.57px;font-size:8.84px;line-height:8.84px;color:#000;font-weight:bold;transform:scaleX(0.732);">2:00</div>
<div class="tick" style="left:441.5px;top:403.9px"></div>
<div class="t tlb" style="left:434.50px;top:419.57px;font-size:8.84px;line-height:8.84px;color:#000;font-weight:bold;transform:scaleX(0.732);">3:00</div>
<div class="tick" style="left:469.3px;top:403.9px"></div>
<div class="t tlb" style="left:462.30px;top:419.57px;font-size:8.84px;line-height:8.84px;color:#000;font-weight:bold;transform:scaleX(0.732);">4:00</div>
<div class="tick" style="left:497.1px;top:403.9px"></div>
<div class="t tlb" style="left:490.10px;top:419.57px;font-size:8.84px;line-height:8.84px;color:#000;font-weight:bold;transform:scaleX(0.732);">5:00</div>
<div class="tick" style="left:524.9px;top:403.9px"></div>
<div class="t tlb" style="left:517.90px;top:419.57px;font-size:8.84px;line-height:8.84px;color:#000;font-weight:bold;transform:scaleX(0.732);">6:00</div>
<div class="tick" style="left:552.7px;top:403.9px"></div>
<div class="t tlb" style="left:545.70px;top:419.57px;font-size:8.84px;line-height:8.84px;color:#000;font-weight:bold;transform:scaleX(0.732);">7:00</div>
<div class="tick" style="left:580.5px;top:403.9px"></div>
<div class="t tlb" style="left:573.50px;top:419.57px;font-size:8.84px;line-height:8.84px;color:#000;font-weight:bold;transform:scaleX(0.732);">8:00</div>
<div class="tick" style="left:608.3px;top:403.9px"></div>
<div class="t tlb" style="left:601.30px;top:419.57px;font-size:8.84px;line-height:8.84px;color:#000;font-weight:bold;transform:scaleX(0.732);">9:00</div>
<div class="tick" style="left:636.1px;top:403.9px"></div>
<div class="t tlb" style="left:629.10px;top:419.57px;font-size:8.84px;line-height:8.84px;color:#000;font-weight:bold;transform:scaleX(0.741);">10:00</div>
<div class="tick" style="left:663.9px;top:403.9px"></div>
<div class="t tlb" style="left:656.90px;top:419.57px;font-size:8.84px;line-height:8.84px;color:#000;font-weight:bold;transform:scaleX(0.757);">11:00</div>
<div class="tick" style="left:691.7px;top:403.9px"></div>
<div class="t tlb" style="left:684.70px;top:419.57px;font-size:8.84px;line-height:8.84px;color:#000;font-weight:bold;transform:scaleX(0.741);">12:00</div>
<div class="tick" style="left:719.5px;top:403.9px"></div>
<div class="t tlb" style="left:712.50px;top:419.57px;font-size:8.84px;line-height:8.84px;color:#000;font-weight:bold;transform:scaleX(0.741);">13:00</div>
<div class="tick" style="left:747.3px;top:403.9px"></div>
<div class="t tlb" style="left:740.30px;top:419.57px;font-size:8.84px;line-height:8.84px;color:#000;font-weight:bold;transform:scaleX(0.741);">14:00</div>
<div class="tick" style="left:775.1px;top:403.9px"></div>
<div class="t tlb" style="left:768.10px;top:419.57px;font-size:8.84px;line-height:8.84px;color:#000;font-weight:bold;transform:scaleX(0.741);">15:00</div>
<div class="tick" style="left:802.9px;top:403.9px"></div>
<div class="t tlb" style="left:795.90px;top:419.57px;font-size:8.84px;line-height:8.84px;color:#000;font-weight:bold;transform:scaleX(0.741);">16:00</div>
<div class="tick" style="left:830.7px;top:403.9px"></div>
<div class="t tlb" style="left:823.70px;top:419.57px;font-size:8.84px;line-height:8.84px;color:#000;font-weight:bold;transform:scaleX(0.741);">17:00</div>
<div class="tick" style="left:858.5px;top:403.9px"></div>
<div class="t tlb" style="left:851.50px;top:419.57px;font-size:8.84px;line-height:8.84px;color:#000;font-weight:bold;transform:scaleX(0.741);">18:00</div>
<div class="tick" style="left:886.3px;top:403.9px"></div>
<div class="t tlb" style="left:879.30px;top:419.57px;font-size:8.84px;line-height:8.84px;color:#000;font-weight:bold;transform:scaleX(0.741);">19:00</div>
<div class="tick" style="left:914.1px;top:403.9px"></div>
<div class="t tlb" style="left:907.10px;top:419.57px;font-size:8.84px;line-height:8.84px;color:#000;font-weight:bold;transform:scaleX(0.741);">20:00</div>
<div class="tick" style="left:941.9px;top:403.9px"></div>
<div class="t tlb" style="left:934.90px;top:419.57px;font-size:8.84px;line-height:8.84px;color:#000;font-weight:bold;transform:scaleX(0.741);">21:00</div>
<div class="tick" style="left:969.7px;top:403.9px"></div>
<div class="t tlb" style="left:962.70px;top:419.57px;font-size:8.84px;line-height:8.84px;color:#000;font-weight:bold;transform:scaleX(0.741);">22:00</div>
<div class="t " style="left:251.90px;top:444.92px;font-size:17.68px;line-height:17.68px;color:#262626;transform:scaleX(0.868);">SATURDAY</div>
<div class="tick" style="left:358.1px;top:444.2px"></div>
<div class="t tlb" style="left:350.30px;top:459.84px;font-size:8.84px;line-height:8.84px;color:#000;font-weight:bold;transform:scaleX(0.732);">0:00</div>
<div class="tick" style="left:385.9px;top:444.2px"></div>
<div class="t tlb" style="left:378.90px;top:459.84px;font-size:8.84px;line-height:8.84px;color:#000;font-weight:bold;transform:scaleX(0.732);">1:00</div>
<div class="tick" style="left:413.7px;top:444.2px"></div>
<div class="t tlb" style="left:406.70px;top:459.84px;font-size:8.84px;line-height:8.84px;color:#000;font-weight:bold;transform:scaleX(0.732);">2:00</div>
<div class="tick" style="left:441.5px;top:444.2px"></div>
<div class="t tlb" style="left:434.50px;top:459.84px;font-size:8.84px;line-height:8.84px;color:#000;font-weight:bold;transform:scaleX(0.732);">3:00</div>
<div class="tick" style="left:469.3px;top:444.2px"></div>
<div class="t tlb" style="left:462.30px;top:459.84px;font-size:8.84px;line-height:8.84px;color:#000;font-weight:bold;transform:scaleX(0.732);">4:00</div>
<div class="tick" style="left:497.1px;top:444.2px"></div>
<div class="t tlb" style="left:490.10px;top:459.84px;font-size:8.84px;line-height:8.84px;color:#000;font-weight:bold;transform:scaleX(0.732);">5:00</div>
<div class="tick" style="left:524.9px;top:444.2px"></div>
<div class="t tlb" style="left:517.90px;top:459.84px;font-size:8.84px;line-height:8.84px;color:#000;font-weight:bold;transform:scaleX(0.732);">6:00</div>
<div class="tick" style="left:552.7px;top:444.2px"></div>
<div class="t tlb" style="left:545.70px;top:459.84px;font-size:8.84px;line-height:8.84px;color:#000;font-weight:bold;transform:scaleX(0.732);">7:00</div>
<div class="tick" style="left:580.5px;top:444.2px"></div>
<div class="t tlb" style="left:573.50px;top:459.84px;font-size:8.84px;line-height:8.84px;color:#000;font-weight:bold;transform:scaleX(0.732);">8:00</div>
<div class="tick" style="left:608.3px;top:444.2px"></div>
<div class="t tlb" style="left:601.30px;top:459.84px;font-size:8.84px;line-height:8.84px;color:#000;font-weight:bold;transform:scaleX(0.732);">9:00</div>
<div class="tick" style="left:636.1px;top:444.2px"></div>
<div class="t tlb" style="left:629.10px;top:459.84px;font-size:8.84px;line-height:8.84px;color:#000;font-weight:bold;transform:scaleX(0.741);">10:00</div>
<div class="tick" style="left:663.9px;top:444.2px"></div>
<div class="t tlb" style="left:656.90px;top:459.84px;font-size:8.84px;line-height:8.84px;color:#000;font-weight:bold;transform:scaleX(0.757);">11:00</div>
<div class="tick" style="left:691.7px;top:444.2px"></div>
<div class="t tlb" style="left:684.70px;top:459.84px;font-size:8.84px;line-height:8.84px;color:#000;font-weight:bold;transform:scaleX(0.741);">12:00</div>
<div class="tick" style="left:719.5px;top:444.2px"></div>
<div class="t tlb" style="left:712.50px;top:459.84px;font-size:8.84px;line-height:8.84px;color:#000;font-weight:bold;transform:scaleX(0.741);">13:00</div>
<div class="tick" style="left:747.3px;top:444.2px"></div>
<div class="t tlb" style="left:740.30px;top:459.84px;font-size:8.84px;line-height:8.84px;color:#000;font-weight:bold;transform:scaleX(0.741);">14:00</div>
<div class="tick" style="left:775.1px;top:444.2px"></div>
<div class="t tlb" style="left:768.10px;top:459.84px;font-size:8.84px;line-height:8.84px;color:#000;font-weight:bold;transform:scaleX(0.741);">15:00</div>
<div class="tick" style="left:802.9px;top:444.2px"></div>
<div class="t tlb" style="left:795.90px;top:459.84px;font-size:8.84px;line-height:8.84px;color:#000;font-weight:bold;transform:scaleX(0.741);">16:00</div>
<div class="tick" style="left:830.7px;top:444.2px"></div>
<div class="t tlb" style="left:823.70px;top:459.84px;font-size:8.84px;line-height:8.84px;color:#000;font-weight:bold;transform:scaleX(0.741);">17:00</div>
<div class="tick" style="left:858.5px;top:444.2px"></div>
<div class="t tlb" style="left:851.50px;top:459.84px;font-size:8.84px;line-height:8.84px;color:#000;font-weight:bold;transform:scaleX(0.741);">18:00</div>
<div class="tick" style="left:886.3px;top:444.2px"></div>
<div class="t tlb" style="left:879.30px;top:459.84px;font-size:8.84px;line-height:8.84px;color:#000;font-weight:bold;transform:scaleX(0.741);">19:00</div>
<div class="tick" style="left:914.1px;top:444.2px"></div>
<div class="t tlb" style="left:907.10px;top:459.84px;font-size:8.84px;line-height:8.84px;color:#000;font-weight:bold;transform:scaleX(0.741);">20:00</div>
<div class="tick" style="left:941.9px;top:444.2px"></div>
<div class="t tlb" style="left:934.90px;top:459.84px;font-size:8.84px;line-height:8.84px;color:#000;font-weight:bold;transform:scaleX(0.741);">21:00</div>
<div class="tick" style="left:969.7px;top:444.2px"></div>
<div class="t tlb" style="left:962.70px;top:459.84px;font-size:8.84px;line-height:8.84px;color:#000;font-weight:bold;transform:scaleX(0.741);">22:00</div>
<div class="t " style="left:251.90px;top:485.19px;font-size:17.68px;line-height:17.68px;color:#262626;transform:scaleX(0.882);">SUNDAY</div>
<div class="tick" style="left:358.1px;top:484.4px"></div>
<div class="t tlb" style="left:350.30px;top:500.11px;font-size:8.84px;line-height:8.84px;color:#000;font-weight:bold;transform:scaleX(0.732);">0:00</div>
<div class="tick" style="left:385.9px;top:484.4px"></div>
<div class="t tlb" style="left:378.90px;top:500.11px;font-size:8.84px;line-height:8.84px;color:#000;font-weight:bold;transform:scaleX(0.732);">1:00</div>
<div class="tick" style="left:413.7px;top:484.4px"></div>
<div class="t tlb" style="left:406.70px;top:500.11px;font-size:8.84px;line-height:8.84px;color:#000;font-weight:bold;transform:scaleX(0.732);">2:00</div>
<div class="tick" style="left:441.5px;top:484.4px"></div>
<div class="t tlb" style="left:434.50px;top:500.11px;font-size:8.84px;line-height:8.84px;color:#000;font-weight:bold;transform:scaleX(0.732);">3:00</div>
<div class="tick" style="left:469.3px;top:484.4px"></div>
<div class="t tlb" style="left:462.30px;top:500.11px;font-size:8.84px;line-height:8.84px;color:#000;font-weight:bold;transform:scaleX(0.732);">4:00</div>
<div class="tick" style="left:497.1px;top:484.4px"></div>
<div class="t tlb" style="left:490.10px;top:500.11px;font-size:8.84px;line-height:8.84px;color:#000;font-weight:bold;transform:scaleX(0.732);">5:00</div>
<div class="tick" style="left:524.9px;top:484.4px"></div>
<div class="t tlb" style="left:517.90px;top:500.11px;font-size:8.84px;line-height:8.84px;color:#000;font-weight:bold;transform:scaleX(0.732);">6:00</div>
<div class="tick" style="left:552.7px;top:484.4px"></div>
<div class="t tlb" style="left:545.70px;top:500.11px;font-size:8.84px;line-height:8.84px;color:#000;font-weight:bold;transform:scaleX(0.732);">7:00</div>
<div class="tick" style="left:580.5px;top:484.4px"></div>
<div class="t tlb" style="left:573.50px;top:500.11px;font-size:8.84px;line-height:8.84px;color:#000;font-weight:bold;transform:scaleX(0.732);">8:00</div>
<div class="tick" style="left:608.3px;top:484.4px"></div>
<div class="t tlb" style="left:601.30px;top:500.11px;font-size:8.84px;line-height:8.84px;color:#000;font-weight:bold;transform:scaleX(0.732);">9:00</div>
<div class="tick" style="left:636.1px;top:484.4px"></div>
<div class="t tlb" style="left:629.10px;top:500.11px;font-size:8.84px;line-height:8.84px;color:#000;font-weight:bold;transform:scaleX(0.741);">10:00</div>
<div class="tick" style="left:663.9px;top:484.4px"></div>
<div class="t tlb" style="left:656.90px;top:500.11px;font-size:8.84px;line-height:8.84px;color:#000;font-weight:bold;transform:scaleX(0.757);">11:00</div>
<div class="tick" style="left:691.7px;top:484.4px"></div>
<div class="t tlb" style="left:684.70px;top:500.11px;font-size:8.84px;line-height:8.84px;color:#000;font-weight:bold;transform:scaleX(0.741);">12:00</div>
<div class="tick" style="left:719.5px;top:484.4px"></div>
<div class="t tlb" style="left:712.50px;top:500.11px;font-size:8.84px;line-height:8.84px;color:#000;font-weight:bold;transform:scaleX(0.741);">13:00</div>
<div class="tick" style="left:747.3px;top:484.4px"></div>
<div class="t tlb" style="left:740.30px;top:500.11px;font-size:8.84px;line-height:8.84px;color:#000;font-weight:bold;transform:scaleX(0.741);">14:00</div>
<div class="tick" style="left:775.1px;top:484.4px"></div>
<div class="t tlb" style="left:768.10px;top:500.11px;font-size:8.84px;line-height:8.84px;color:#000;font-weight:bold;transform:scaleX(0.741);">15:00</div>
<div class="tick" style="left:802.9px;top:484.4px"></div>
<div class="t tlb" style="left:795.90px;top:500.11px;font-size:8.84px;line-height:8.84px;color:#000;font-weight:bold;transform:scaleX(0.741);">16:00</div>
<div class="tick" style="left:830.7px;top:484.4px"></div>
<div class="t tlb" style="left:823.70px;top:500.11px;font-size:8.84px;line-height:8.84px;color:#000;font-weight:bold;transform:scaleX(0.741);">17:00</div>
<div class="tick" style="left:858.5px;top:484.4px"></div>
<div class="t tlb" style="left:851.50px;top:500.11px;font-size:8.84px;line-height:8.84px;color:#000;font-weight:bold;transform:scaleX(0.741);">18:00</div>
<div class="tick" style="left:886.3px;top:484.4px"></div>
<div class="t tlb" style="left:879.30px;top:500.11px;font-size:8.84px;line-height:8.84px;color:#000;font-weight:bold;transform:scaleX(0.741);">19:00</div>
<div class="tick" style="left:914.1px;top:484.4px"></div>
<div class="t tlb" style="left:907.10px;top:500.11px;font-size:8.84px;line-height:8.84px;color:#000;font-weight:bold;transform:scaleX(0.741);">20:00</div>
<div class="tick" style="left:941.9px;top:484.4px"></div>
<div class="t tlb" style="left:934.90px;top:500.11px;font-size:8.84px;line-height:8.84px;color:#000;font-weight:bold;transform:scaleX(0.741);">21:00</div>
<div class="tick" style="left:969.7px;top:484.4px"></div>
<div class="t tlb" style="left:962.70px;top:500.11px;font-size:8.84px;line-height:8.84px;color:#000;font-weight:bold;transform:scaleX(0.741);">22:00</div>
<div class="bar" style="left:747.3px;top:234.2px;width:112.2px;background:#00ffff"></div>
<div class="t " style="left:748.10px;top:234.48px;font-size:8.26px;line-height:8.26px;color:#111;transform:scaleX(0.875);">Happy Hour @ 0.23333</div>
<div class="bar" style="left:691.7px;top:274.5px;width:195.6px;background:#ffff80"></div>
<div class="t " style="left:692.50px;top:274.75px;font-size:8.26px;line-height:8.26px;color:#111;transform:scaleX(0.889);">Dienstag Nachmittag @ 0.5</div>
<div class="bar" style="left:691.7px;top:314.7px;width:195.6px;background:#ffff80"></div>
<div class="t " style="left:692.50px;top:315.02px;font-size:8.26px;line-height:8.26px;color:#111;transform:scaleX(0.912);">Mittwoch Nachmittag @ 0.5</div>
<div class="bar" style="left:691.7px;top:355.0px;width:195.6px;background:#99aaff"></div>
<div class="t " style="left:692.50px;top:355.29px;font-size:8.26px;line-height:8.26px;color:#111;transform:scaleX(0.897);">Donnerstag Nachmittag @ 0.6</div>
<div class="bar" style="left:691.7px;top:395.3px;width:293.8px;background:#ccffcc"></div>
<div class="t " style="left:692.50px;top:395.56px;font-size:8.26px;line-height:8.26px;color:#111;transform:scaleX(0.861);">Freitag @ 0.7</div>
<div class="bar" style="left:691.7px;top:435.6px;width:293.8px;background:#ccffcc"></div>
<div class="t " style="left:692.50px;top:435.83px;font-size:8.26px;line-height:8.26px;color:#111;transform:scaleX(0.836);">Samstag @ 0.7</div>
<div class="bar" style="left:636.1px;top:475.8px;width:279.0px;background:#ffccff"></div>
<div class="t " style="left:636.90px;top:476.10px;font-size:8.26px;line-height:8.26px;color:#111;transform:scaleX(0.878);">Sonntag @ 0.65</div>
</div></div>
<div id="hscroll"><div class="chev" style="left:3.5px;top:4.5px;transform:rotate(45deg)"></div><div class="thumb"></div><div class="chev" style="left:724.5px;top:4.5px;transform:rotate(-135deg)"></div></div>

<div class="pg" style="left:462.2px;width:12.6px"><div class="a" style="left:2.7px;top:4.6px;width:0;height:0;border-top:3.7px solid transparent;border-bottom:3.7px solid transparent;border-right:5.6px solid #505050"></div></div>
<div class="pg" style="left:476.4px;width:16.1px"></div>
<div class="pg" style="left:495.2px;width:15.8px"></div>
<div class="pg sel" style="left:513px;width:17px"></div>
<div class="pg" style="left:532px;width:15.7px"></div>
<div class="pg" style="left:550.1px;width:12px"><div class="a" style="left:3px;top:4.6px;width:0;height:0;border-top:3.7px solid transparent;border-bottom:3.7px solid transparent;border-left:5.6px solid #505050"></div></div>

<div class="btn" style="left:365.3px;width:115px"><div class="a" style="left:8.7px;top:4.7px"><svg width="32" height="34" viewBox="0 0 32 34">
<defs><radialGradient id="rx" cx="0.5" cy="0.3" r="0.75"><stop offset="0" stop-color="#ff8a8a"/><stop offset="0.45" stop-color="#ff1414"/><stop offset="0.9" stop-color="#e00000"/><stop offset="1" stop-color="#b00000"/></radialGradient></defs>
<ellipse cx="16" cy="17" rx="16" ry="16.9" fill="url(#rx)"/>
<ellipse cx="16" cy="17" rx="15.5" ry="16.4" fill="none" stroke="#c80000" stroke-width="0.8"/><ellipse cx="16" cy="17" rx="16.1" ry="17" fill="none" stroke="#f4f4f4" stroke-width="0.7"/>
<path d="M16 14.5 L20.3 9.2 L24.4 13.2 L19.6 17.3 L24.4 21.4 L20.3 25.6 L16 20.3 L11.7 25.6 L7.6 21.4 L12.4 17.3 L7.6 13.2 L11.7 9.2 Z" fill="#fff" transform="translate(16 17.4) scale(0.88) translate(-16 -17.4)"/>
</svg></div></div>
<div class="btn" style="left:485.4px;width:174.1px"><div class="a" style="left:8.5px;top:5px"><svg width="31" height="33" viewBox="0 0 31 33">
<defs><radialGradient id="gs" cx="0.5" cy="0.25" r="0.8"><stop offset="0" stop-color="#a6e6a0"/><stop offset="0.5" stop-color="#56c052"/><stop offset="1" stop-color="#2d9a2d"/></radialGradient></defs>
<ellipse cx="15.5" cy="16.4" rx="15.5" ry="16.4" fill="url(#gs)"/>
<ellipse cx="15.5" cy="16.4" rx="15" ry="15.9" fill="none" stroke="#33a033" stroke-width="0.9"/>
<g fill="none" stroke="#f4fff4" stroke-width="1.3">
<path d="M10 9.5 h11.5 v6.7" stroke-opacity="0.3"/>
<path d="M13 9.5 v6.7 M16 9.5 v6.7 M19 9.5 v6.7" stroke-opacity="0.25"/>
<path d="M22.1 9 v15.3 h-12.5 l-1.2 -1.5"/>
<path d="M11.4 20.5 v-4.3 h10.7"/>
</g>
<rect x="15.3" y="19.3" width="3.7" height="4.7" fill="#f4fff4"/>
</svg></div></div>
<div class="t " style="left:20.80px;top:27.41px;font-size:22.46px;line-height:22.46px;color:#333;font-weight:bold;transform:scaleX(0.918);">Tarif (Einstellungen)</div><div class="t " style="left:75.40px;top:131.73px;font-size:22.32px;line-height:22.32px;color:#222;transform:scaleX(0.963);">Tarif Minuten</div><div class="t " style="left:90.00px;top:163.18px;font-size:12.61px;line-height:12.61px;color:#333;font-weight:bold;transform:scaleX(0.799);">Tarifpläne</div><div class="t " style="left:260.00px;top:80.83px;font-size:14.78px;line-height:14.78px;color:#333;transform:scaleX(0.914);">Zeittarif</div><div class="t " style="left:318.66px;top:81.25px;font-size:14.06px;line-height:14.06px;color:#333;transform:scaleX(0.937);">Feiertag</div><div class="t " style="left:380.07px;top:81.25px;font-size:14.06px;line-height:14.06px;color:#333;transform:scaleX(0.932);">Kinder</div><div class="t " style="left:338.23px;top:139.58px;font-size:12.61px;line-height:12.61px;color:#222;transform:scaleX(0.774);">Preis ausserhalb Tarifzone:</div><div class="t " style="left:485.10px;top:129.11px;font-size:11.16px;line-height:11.16px;color:#333;transform:scaleX(0.871);">Bezeichnung</div><div class="t " style="left:472.10px;top:150.74px;font-size:11.59px;line-height:11.59px;color:#333;transform:scaleX(0.881);">Zeittarif</div><div class="t " style="left:619.60px;top:126.46px;font-size:10.87px;line-height:10.87px;color:#333;transform:scaleX(0.926);">Standard Tarif Minute inkl. MWSt</div><div class="t " style="left:667.30px;top:150.85px;font-size:12.17px;line-height:12.17px;color:#222;font-weight:bold;transform:scaleX(1.034);">.60000</div><div class="t " style="left:802.60px;top:128.94px;font-size:11.01px;line-height:11.01px;color:#333;transform:scaleX(0.842);">Farbe</div><div class="t " style="left:804.10px;top:151.45px;font-size:10.29px;line-height:10.29px;color:#333;transform:scaleX(1.037);">#f0f8ff</div><div class="t " style="left:548.10px;top:197.97px;font-size:15.22px;line-height:15.22px;color:#333;transform:scaleX(0.832);">Tarifzonen hinzufügen/ändern</div><div class="t " style="left:411.70px;top:598.02px;font-size:13.62px;line-height:13.62px;color:#333;transform:scaleX(0.909);">Abbrechen</div><div class="t " style="left:531.80px;top:597.65px;font-size:14.06px;line-height:14.06px;color:#333;transform:scaleX(0.877);">Speichern &amp; Beenden</div><div class="t " style="left:506.60px;top:561.56px;font-size:8.41px;line-height:8.41px;color:#444;transform:scaleX(0.991);">3/4</div><div class="t " style="left:482.10px;top:541.41px;font-size:8.70px;line-height:8.70px;color:#333;transform:scaleX(0.920);">1</div><div class="t " style="left:500.80px;top:541.41px;font-size:8.70px;line-height:8.70px;color:#333;transform:scaleX(0.920);">2</div><div class="t " style="left:519.20px;top:541.41px;font-size:8.70px;line-height:8.70px;color:#e8f6ff;transform:scaleX(0.920);">3</div><div class="t " style="left:537.50px;top:541.41px;font-size:8.70px;line-height:8.70px;color:#333;transform:scaleX(0.920);">4</div>
</body></html>
